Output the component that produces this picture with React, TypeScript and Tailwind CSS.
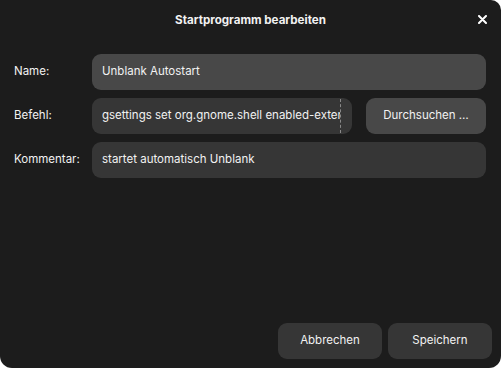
import React from "react";

export default function App() {
  return (
    <div className="w-[501px] h-[368px] bg-white" style={{ fontFamily: "Inter, 'Noto Sans', sans-serif" }}>
      <div className="w-[501px] h-[368px] bg-[#1c1c1c] rounded-tr-[10px] rounded-b-[12px] flex flex-col text-[11.5px] text-[#f2f2f2]">
        <div className="h-[40px] flex items-center justify-center relative shrink-0">
          <span className="font-bold text-[11.6px] mt-[1px]">Startprogramm bearbeiten</span>
          <svg className="absolute right-[14px] top-[15px]" width="9" height="9" viewBox="0 0 9 9">
            <path d="M1 1L8 8M8 1L1 8" stroke="#ffffff" strokeWidth="2" strokeLinecap="round" />
          </svg>
        </div>
        <div className="flex flex-col gap-[8px] px-[14px] pt-[14px] pr-[15px]">
          <div className="flex items-center">
            <span className="w-[78px] shrink-0">Name:</span>
            <div className="flex-1 h-[36px] rounded-[9px] bg-[#484848] flex items-center px-[10px]">Unblank Autostart</div>
          </div>
          <div className="flex items-center">
            <span className="w-[78px] shrink-0">Befehl:</span>
            <div className="w-[260px] h-[36px] rounded-[9px] bg-[#363636] flex items-center pl-[10px] pr-[11px]">
              <div className="flex-1 overflow-hidden whitespace-nowrap">gsettings set org.gnome.shell enabled-extensions</div>
              <div className="self-stretch my-[1px] w-0 border-l border-dashed border-[#8a8a8a]" />
            </div>
            <div className="ml-[14px] flex-1 h-[36px] rounded-[9px] bg-[#484848] flex items-center justify-center">Durchsuchen …</div>
          </div>
          <div className="flex items-center">
            <span className="w-[78px] shrink-0">Kommentar:</span>
            <div className="flex-1 h-[36px] rounded-[9px] bg-[#363636] flex items-center px-[10px]">startet automatisch Unblank</div>
          </div>
        </div>
        <div className="flex-1" />
        <div className="flex justify-end gap-[6px] pr-[9px] pb-[9px]">
          <div className="w-[104px] h-[36px] rounded-[9px] bg-[#363636] flex items-center justify-center">Abbrechen</div>
          <div className="w-[104px] h-[36px] rounded-[9px] bg-[#363636] flex items-center justify-center">Speichern</div>
        </div>
      </div>
    </div>
  );
}
